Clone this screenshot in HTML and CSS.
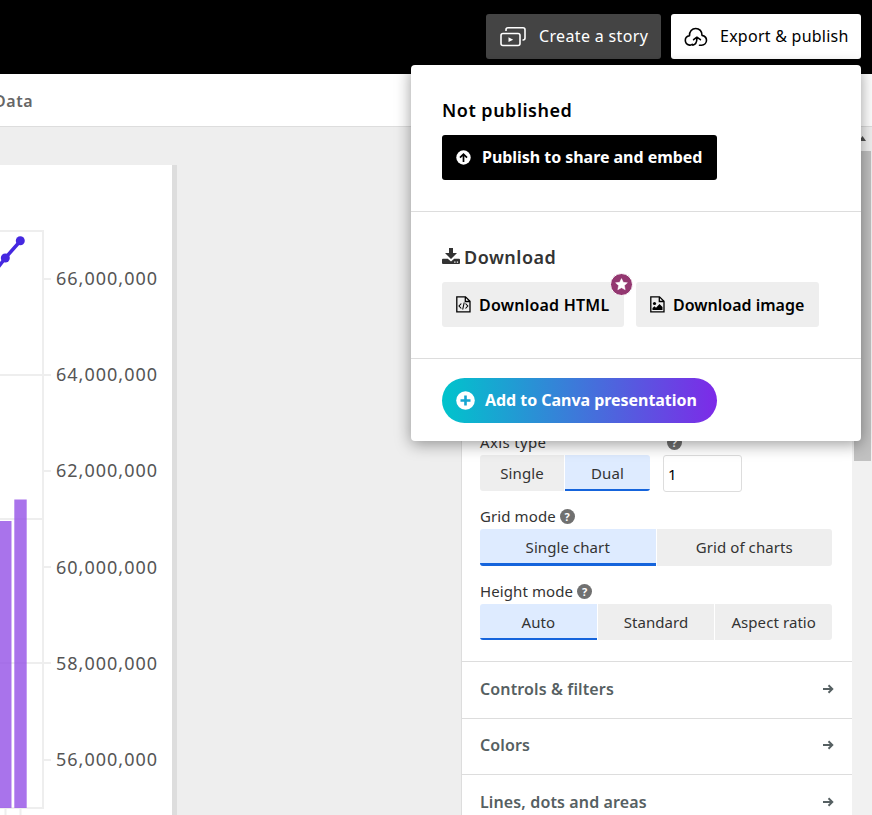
FILE: index.html
```html
<!DOCTYPE html>
<html lang="en">
<head>
<meta charset="utf-8">
<title>Chart editor</title>
<link rel="stylesheet" href="styles.css">
</head>
<body>
<div class="app">
  <header class="topbar">
    <button class="top-btn story">
      <svg width="26" height="20" viewBox="0 0 26 20" fill="none" stroke="currentColor" stroke-width="1.6" stroke-linejoin="round"><rect x="1" y="6.500" width="19" height="12" rx="2"/><path d="M6 4V2.800a2 2 0 0 1 2-2h15a2 2 0 0 1 2 2V11a2 2 0 0 1-2 2h-.5"/><path d="M8.500 10.300v4.700l4.700-2.350z" fill="currentColor" stroke="none"/></svg>
      <span>Create a story</span>
    </button>
    <button class="top-btn export">
      <svg width="24" height="20" viewBox="0 0 24 20" fill="none" stroke="currentColor" stroke-width="1.600" stroke-linecap="round" stroke-linejoin="round"><path d="M8.300 17.300C7.500 18.100 6.500 18.300 5.500 18.100 3 17.700 1.300 15.700 1.300 13.300c0-2.300 1.500-4.200 4.200-4.600C5.300 4.200 8 1.500 11.700 1.500s6.500 2.600 6.300 6.900c2.800.6 4.500 2.500 4.500 4.900 0 2.800-2.200 4.900-4.900 4.900h-2.100"/><path d="M8.800 18.100c2.900-.6 4.100-2.500 4.100-6.900M9.600 12.700l3.300-2.500 3.500 2.500"/></svg>
      <span>Export &amp; publish</span>
    </button>
  </header>
  <nav class="tabs"><span class="tab">Data</span></nav>
  <div class="workspace">
    <main class="stage">
      <div class="card">
        <svg class="plot" width="56" height="588" viewBox="0 0 56 588">
          <g fill="none" stroke="#eee" stroke-width="2"><path d="M0 4H43V581H0M0 148H51M0 292H43M0 436H51M43 52H51M43 244H51M43 340H51M43 533H51M5.500 581v7M20.500 581v7"/></g>
          <g fill="#9450e6" fill-opacity=".8"><rect x="-2" y="294" width="13.500" height="287"/><rect x="14.300" y="272.500" width="12.400" height="308.500"/></g>
          <path d="M-2 40.500L5.300 31 20.300 14" fill="none" stroke="#4528e0" stroke-width="3.500"/>
          <g fill="#4528e0"><circle cx="5.300" cy="31" r="4.500"/><circle cx="20.300" cy="13.700" r="4.500"/></g>
        </svg>
        <div class="axis">
          <span>66,000,000</span><span>64,000,000</span><span>62,000,000</span><span>60,000,000</span><span>58,000,000</span><span>56,000,000</span>
        </div>
      </div>
    </main>
    <aside class="panel">
      <div class="row">
        <div class="field axis-type"><div class="label">Axis type</div>
          <div class="seg"><button>Single</button><button class="on">Dual</button></div></div>
        <div class="field"><div class="label helped"><i class="help">?</i></div><input class="num" value="1"></div>
      </div>
      <div class="field grid-mode"><div class="label">Grid mode<i class="help">?</i></div>
        <div class="seg"><button class="on">Single chart</button><button>Grid of charts</button></div></div>
      <div class="field height-mode"><div class="label">Height mode<i class="help">?</i></div>
        <div class="seg"><button class="on">Auto</button><button>Standard</button><button>Aspect ratio</button></div></div>
      <div class="section"><span>Controls &amp; filters</span><svg width="11" height="10" viewBox="0 0 11 10"><path d="M0 5h9M5.500 1.300L9.300 5 5.500 8.700" fill="none" stroke="currentColor" stroke-width="1.900"/></svg></div>
      <div class="section"><span>Colors</span><svg width="11" height="10" viewBox="0 0 11 10"><path d="M0 5h9M5.500 1.300L9.300 5 5.500 8.700" fill="none" stroke="currentColor" stroke-width="1.900"/></svg></div>
      <div class="section"><span>Lines, dots and areas</span><svg width="11" height="10" viewBox="0 0 11 10"><path d="M0 5h9M5.500 1.300L9.300 5 5.500 8.700" fill="none" stroke="currentColor" stroke-width="1.900"/></svg></div>
    </aside>
    <div class="scroll"><svg width="7" height="5" viewBox="0 0 7 5"><path d="M0 5L3.500 0 7 5z" fill="#505050"/></svg><div class="thumb"></div></div>
  </div>
  <div class="menu">
    <section class="publish">
      <h3>Not published</h3>
      <button class="btn dark"><svg width="15" height="15" viewBox="0 0 15 15"><circle cx="7.500" cy="7.500" r="7.200" fill="#fff"/><path d="M7.500 12V4.300M4 7.600l3.500-3.500L11 7.600" fill="none" stroke="#000" stroke-width="1.700"/></svg><span>Publish to share and embed</span></button>
    </section>
    <section class="download">
      <h3><svg width="18" height="16" viewBox="0 0 18 16" fill="currentColor"><path d="M7 0h4v5h4L9 11 3 5h4z"/><path fill-rule="evenodd" d="M1 10.800h4.800L9 13.500l3.200-2.700H17a1 1 0 0 1 1 1V15a1 1 0 0 1-1 1H1a1 1 0 0 1-1-1v-3.200a1 1 0 0 1 1-1zM12.200 13.500v1.200h1.300v-1.200zm2.600 0v1.200h1.300v-1.200z"/></svg><span>Download</span></h3>
      <div class="pair">
        <button class="btn light html"><svg width="15" height="17" viewBox="0 0 15 17" fill="none" stroke="currentColor" stroke-width="1.300"><path d="M.8.800h8.700l4.500 4.500v10.600H.8zM9.300.8v4.700H14"/><path d="M5.300 7.500L3 10l2.300 2.500M9.500 7.500L11.800 10l-2.300 2.500M8.200 6.500l-1.500 7" stroke-width="1.100"/></svg><span>Download HTML</span>
          <i class="badge"><svg width="13" height="13" viewBox="0 0 13 13"><path d="M6.500.6l1.800 3.700 4.100.5-3 2.800.8 4.100-3.700-2-3.700 2 .8-4.100-3-2.800 4.100-.5z" fill="#fff" stroke="#fff" stroke-width=".5" stroke-linejoin="round"/></svg></i></button>
        <button class="btn light image"><svg width="15" height="17" viewBox="0 0 15 17" fill="none" stroke="currentColor" stroke-width="1.300"><path d="M.8.800h8.700l4.500 4.500v10.600H.8zM9.300.8v4.700H14"/><circle cx="4.500" cy="7.500" r="1.600" fill="currentColor" stroke="none"/><path d="M2.500 14v-2l2-1.800 1.500 1.500L9.500 8l3 3v3z" fill="currentColor" stroke="none"/></svg><span>Download image</span></button>
      </div>
    </section>
    <section class="canva">
      <button class="btn pill"><svg width="19" height="19" viewBox="0 0 19 19"><circle cx="9.500" cy="9.500" r="9.300" fill="#fff"/><path d="M9.500 4.500v10M4.500 9.500h10" stroke="#15a5d1" stroke-width="2.600"/></svg><span>Add to Canva presentation</span></button>
    </section>
  </div>
</div>
</body>
</html>
```

FILE: styles.css
```css
* { box-sizing: border-box; }
body { margin: 0; font-family: "Noto Sans", "Open Sans", sans-serif; color: #333; overflow: hidden; }
button { border: 0; font: inherit; color: inherit; padding: 0; }
svg { flex: none; display: block; }
.app { position: relative; width: 872px; height: 815px; display: flex; flex-direction: column; background: #eee; overflow: hidden; }
.topbar { flex: none; height: 74px; background: #000; display: flex; justify-content: flex-end; gap: 10px; padding: 14px 11px 15px 0; }
.top-btn { height: 45px; border-radius: 3px; display: flex; align-items: center; font-size: 16px; white-space: nowrap; padding-left: 14px; }
.top-btn span, .dark span, .pill span { padding-bottom: 2px; }
.story { width: 175px; background: #444; color: #fff; gap: 13px; letter-spacing: .34px; }
.export { width: 190px; background: #fff; color: #000; gap: 12px; padding-left: 13px; letter-spacing: .25px; }
.tabs { flex: none; height: 53px; background: #fff; border-bottom: 1px solid #ddd; display: flex; align-items: center; }
.tab { margin-left: -6px; padding-top: 1px; font-size: 16px; font-weight: 600; color: #666; letter-spacing: .6px; }
.workspace { flex: 1; display: flex; min-height: 0; }
.stage { width: 461px; padding-top: 38px; display: flex; align-items: stretch; }
.card { width: 177px; background: #fff; border-right: 5px solid #ddd; display: flex; padding-top: 62px; }
.plot { width: 56px; }
.axis { display: flex; flex-direction: column; }
.axis span { height: 96.200px; line-height: 103px; font-size: 18px; color: #555; white-space: nowrap; letter-spacing: 1px; }
.panel { width: 391px; border-left: 1px solid #ddd; background: #fff; padding-top: 306px; flex: none; overflow: hidden; }
.row { display: flex; gap: 13px; padding-left: 18px; height: 74px; }
.axis-type { width: 170px; }
.label { height: 22px; padding-bottom: 4px; line-height: 18px; font-size: 15px; letter-spacing: .1px; display: flex; align-items: center; gap: 4px; white-space: nowrap; }
.axis-type .label { letter-spacing: .35px; }
.helped { padding-left: 4px; }
.help { width: 15px; height: 15px; border-radius: 50%; background: #707070; color: #fff; font: bold 11px/15px "Noto Sans", sans-serif; text-align: center; }
.seg { display: flex; gap: 1px; height: 36px; border-radius: 3px; overflow: hidden; }
.seg button { flex: 1 1 0; background: #eee; font-size: 15px; white-space: nowrap; letter-spacing: .08px; }
.axis-type .seg button:first-child { flex: 0 0 84px; }
.seg .on { background: #deebff; border-bottom: 2px solid #1564dc; padding-top: 2px; }
.num { width: 79px; height: 37px; border: 1px solid #ddd; border-radius: 3px; font: 15px "Noto Sans", sans-serif; padding: 0 4px; color: #000; display: block; }
.grid-mode, .height-mode { padding: 0 20px 0 18px; }
.grid-mode { height: 75px; }
.grid-mode .seg { height: 37px; }
.grid-mode .seg button { padding-bottom: 1px; }
.grid-mode .seg .on { border-bottom-width: 3px; padding-bottom: 0; }
.height-mode { height: 79px; }
.section { flex: none; height: 56.600px; border-top: 1px solid #ddd; display: flex; align-items: center; justify-content: space-between; padding: 0 18px 2px; font-size: 16px; font-weight: 600; color: #566062; white-space: nowrap; letter-spacing: .13px; }
.scroll { width: 20px; background: #f1f1f1; padding: 9px 1px 0 2px; }
.scroll svg { margin-left: 5px; }
.thumb { margin-top: 10px; height: 310px; background: #c1c1c1; }
.menu { position: absolute; left: 411px; top: 65px; width: 450px; height: 376px; background: #fff; border-radius: 4px; box-shadow: 0 3px 16px rgba(0,0,0,.4); }
.menu section { padding-left: 31px; }
.publish, .download { height: 147px; padding-top: 32px; border-bottom: 1px solid #ddd; }
.canva { padding-top: 19px; }
h3 { margin: 0; height: 38px; line-height: 26px; font-size: 18px; font-weight: 600; letter-spacing: .5px; color: #000; display: flex; white-space: nowrap; }
.download h3 { color: #333; gap: 4px; line-height: 27px; }
.download h3 svg { margin-top: 4px; }
.btn { height: 45px; border-radius: 3px; display: flex; align-items: center; font-size: 16px; font-weight: 600; white-space: nowrap; padding-left: 14px; }
.dark { width: 275px; background: #000; color: #fff; gap: 11px; font-weight: 700; letter-spacing: -.04px; }
.pair { display: flex; gap: 12px; }
.light { background: #eee; color: #000; gap: 8px; position: relative; }
.html { width: 182px; letter-spacing: .22px; }
.image { width: 183px; }
.badge { position: absolute; left: 168px; top: -9px; width: 23px; height: 23px; border-radius: 50%; background: #933770; border: 1px solid #fff; display: flex; align-items: center; justify-content: center; }
.pill { width: 275px; border-radius: 23px; background: linear-gradient(90deg, #00c4cc, #7d2ae8); color: #fff; gap: 10px; font-weight: 700; letter-spacing: -.04px; }
```
